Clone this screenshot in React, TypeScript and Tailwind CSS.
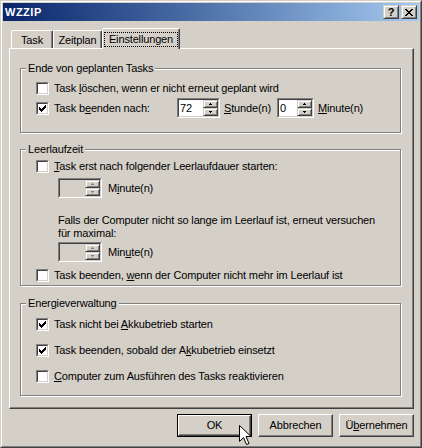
import React from "react";

const Check = ({ checked }: { checked?: boolean }) => (
  <div className="flex w-[13px] h-[13px] shrink-0 border border-t-[#808080] border-l-[#808080] border-r-white border-b-white">
    <div className="flex flex-1 items-center justify-center bg-white border border-t-[#404040] border-l-[#404040] border-r-[#d4d0c8] border-b-[#d4d0c8]">
      {checked && (
        <svg width="7" height="7" viewBox="0 0 7 7" shapeRendering="crispEdges">
          <path
            d="M6 0h1v1h-1z M5 1h2v1h-2z M0 2h1v1H0z M4 2h3v1h-3z M0 3h2v1H0z M3 3h3v1h-3z M0 4h5v1H0z M1 5h3v1H1z M2 6h1v1H2z"
            fill="#000"
          />
        </svg>
      )}
    </div>
  </div>
);

const Arrow = ({ up, disabled }: { up?: boolean; disabled?: boolean }) => (
  <svg width="3" height="2" viewBox="0 0 3 2" shapeRendering="crispEdges">
    <path d={up ? "M1 0h1v1H1z M0 1h3v1H0z" : "M0 0h3v1H0z M1 1h1v1H1z"} fill={disabled ? "#808080" : "#000"} />
  </svg>
);

const SpinButton = ({ up, disabled }: { up?: boolean; disabled?: boolean }) => (
  <div className="flex flex-1 items-center justify-center bg-[#d4d0c8] border border-t-[#d4d0c8] border-l-[#d4d0c8] border-r-[#404040] border-b-[#404040] shadow-[inset_1px_1px_0_#fff,inset_-1px_-1px_0_#808080]">
    <Arrow up={up} disabled={disabled} />
  </div>
);

const Spin = ({ value, width, disabled }: { value?: string; width: string; disabled?: boolean }) => (
  <div className={`flex h-[20px] shrink-0 border border-t-[#808080] border-l-[#808080] border-r-white border-b-white ${width}`}>
    <div
      className={`flex flex-1 border border-t-[#404040] border-l-[#404040] border-r-[#d4d0c8] border-b-[#d4d0c8] ${
        disabled ? "bg-[#d4d0c8]" : "bg-white"
      }`}
    >
      <div className="flex flex-1 items-center pl-[1px]">{value}</div>
      <div className="flex flex-col w-[15px]">
        <SpinButton up disabled={disabled} />
        <SpinButton disabled={disabled} />
      </div>
    </div>
  </div>
);

const Row = ({ checked, children }: { checked?: boolean; children: React.ReactNode }) => (
  <div className="flex items-center h-[16px] gap-[5px]">
    <Check checked={checked} />
    <span className="whitespace-nowrap">{children}</span>
  </div>
);

const Group = ({ title, className, children }: { title: string; className: string; children: React.ReactNode }) => (
  <div className={`relative flex flex-col w-[381px] pl-[15px] border border-[#808080] shadow-[inset_1px_1px_0_#fff,1px_1px_0_#fff] ${className}`}>
    <span className="absolute left-[5px] -top-[7px] px-[2px] bg-[#d4d0c8] whitespace-nowrap">{title}</span>
    {children}
  </div>
);

const PushButton = ({ children, isDefault }: { children: React.ReactNode; isDefault?: boolean }) => (
  <div className={`flex w-[75px] h-[23px] ${isDefault ? "border border-black" : ""}`}>
    <div className="flex flex-1 items-center justify-center border border-t-white border-l-white border-r-[#404040] border-b-[#404040] shadow-[inset_-1px_-1px_0_#808080]">
      {children}
    </div>
  </div>
);

const CaptionButton = ({ children }: { children: React.ReactNode }) => (
  <div className="flex w-[16px] h-[14px] items-center justify-center bg-[#d4d0c8] border border-t-[#d4d0c8] border-l-[#d4d0c8] border-r-[#404040] border-b-[#404040] shadow-[inset_1px_1px_0_#fff,inset_-1px_-1px_0_#808080]">
    {children}
  </div>
);

export default function App() {
  return (
    <div className="relative w-[422px] h-[448px] flex bg-[#d4d0c8] text-black text-[11px] leading-[13px] tracking-[-0.15px] font-['Liberation_Sans',Arial,sans-serif] border border-t-[#d4d0c8] border-l-[#d4d0c8] border-r-[#404040] border-b-[#404040]">
      <div className="flex flex-1 flex-col p-px border border-t-white border-l-white border-r-[#808080] border-b-[#808080]">
        {/* Title bar */}
        <div className="flex items-center h-[18px] pl-[2px] pr-[2px] bg-gradient-to-r from-[#0a246a] to-[#a6caf0]">
          <span className="pt-[1px] font-bold text-white tracking-[0.5px]">WZZIP</span>
          <div className="ml-auto flex gap-[2px]">
            <CaptionButton>
              <span className="font-bold text-[11px] leading-[11px] pt-[1px]">?</span>
            </CaptionButton>
            <CaptionButton>
              <svg width="8" height="7" viewBox="0 0 8 7" shapeRendering="crispEdges">
                <path
                  d="M0 0h2v1H0z M6 0h2v1H6z M1 1h2v1H1z M5 1h2v1H5z M2 2h4v1H2z M3 3h2v1H3z M2 4h4v1H2z M1 5h2v1H1z M5 5h2v1H5z M0 6h2v1H0z M6 6h2v1H6z"
                  fill="#000"
                />
              </svg>
            </CaptionButton>
          </div>
        </div>

        {/* Tabs */}
        <div className="flex items-end h-[20px] mt-[7px] ml-[6px] pl-[2px]">
          <div className="flex items-center justify-center w-[42px] h-[18px] pt-[2px] rounded-tl-[2px] rounded-tr-[2px] border-t border-l border-t-white border-l-white border-r border-r-[#404040] shadow-[inset_-1px_0_0_#808080]">
            Task
          </div>
          <div className="flex items-center justify-center w-[49px] h-[18px] pt-[2px] rounded-tl-[2px] rounded-tr-[2px] border-t border-l border-t-white border-l-white border-r border-r-[#404040] shadow-[inset_-1px_0_0_#808080]">
            Zeitplan
          </div>
          <div className="relative z-10 -mb-px flex justify-center w-[78px] h-[21px] pt-[3px] bg-[#d4d0c8] rounded-tl-[2px] rounded-tr-[2px] border-t border-l border-t-white border-l-white border-r border-r-[#404040] shadow-[inset_-1px_0_0_#808080]">
            <span className="flex justify-center w-[74px] h-[15px] leading-[13px] border border-dotted border-black">
              Einstellungen
            </span>
          </div>
        </div>

        {/* Panel */}
        <div className="flex flex-col w-[405px] h-[361px] ml-[6px] pl-[10px] pt-[19px] border border-t-white border-l-white border-r-[#404040] border-b-[#404040] shadow-[inset_-1px_-1px_0_#808080]">
          <Group title="Ende von geplanten Tasks" className="h-[65px] pt-[11px] gap-[2px]">
            <Row>
              Task <u>l</u>öschen, wenn er nicht erneut geplant wird
            </Row>
            <div className="flex items-center h-[20px]">
              <Check checked />
              <span className="ml-[5px] w-[123px] whitespace-nowrap">
                Task b<u>e</u>enden nach:
              </span>
              <Spin value="72" width="w-[43px]" />
              <span className="ml-[4px] w-[53px]">
                <u>S</u>tunde(n)
              </span>
              <Spin value="0" width="w-[37px]" />
              <span className="ml-[4px]">
                <u>M</u>inute(n)
              </span>
            </div>
          </Group>

          <Group title="Leerlaufzeit" className="mt-[16px] h-[137px] pt-[8px]">
            <Row>
              <u>T</u>ask erst nach folgender Leerlaufdauer starten:
            </Row>
            <div className="flex items-center mt-[4px] ml-[22px]">
              <Spin width="w-[44px]" disabled />
              <span className="ml-[6px]">
                M<u>i</u>nute(n)
              </span>
            </div>
            <div className="mt-[16px] ml-[22px] whitespace-nowrap">
              Falls der Computer nicht so lange im Leerlauf ist, erneut versuchen
              <br />
              für maximal:
            </div>
            <div className="flex items-center mt-[2px] ml-[22px]">
              <Spin width="w-[44px]" disabled />
              <span className="ml-[6px]">
                Min<u>u</u>te(n)
              </span>
            </div>
            <div className="mt-[5px]">
              <Row>
                Task beenden, <u>w</u>enn der Computer nicht mehr im Leerlauf ist
              </Row>
            </div>
          </Group>

          <Group title="Energieverwaltung" className="mt-[17px] h-[93px] pt-[12px] gap-[10px]">
            <Row checked>
              Task nicht bei <u>A</u>kkubetrieb starten
            </Row>
            <Row checked>
              Task beenden, sobald der A<u>k</u>kubetrieb einsetzt
            </Row>
            <Row>
              <u>C</u>omputer zum Ausführen des Tasks reaktivieren
            </Row>
          </Group>
        </div>

        {/* Buttons */}
        <div className="flex justify-end gap-[6px] w-[405px] ml-[6px] mt-[5px]">
          <PushButton isDefault>OK</PushButton>
          <PushButton>Abbrechen</PushButton>
          <PushButton>
            Ü<u>b</u>ernehmen
          </PushButton>
        </div>
      </div>

      {/* Mouse pointer */}
      <svg className="absolute left-[238px] top-[424px]" width="13" height="21" viewBox="0 0 13 21">
        <path
          d="M0.5 0.5 V16.5 L4.5 12.5 L7.5 19.5 L10 18.5 L7 11.5 H12 Z"
          fill="#fff"
          stroke="#000"
          strokeWidth="1"
          strokeLinejoin="miter"
        />
      </svg>
    </div>
  );
}
